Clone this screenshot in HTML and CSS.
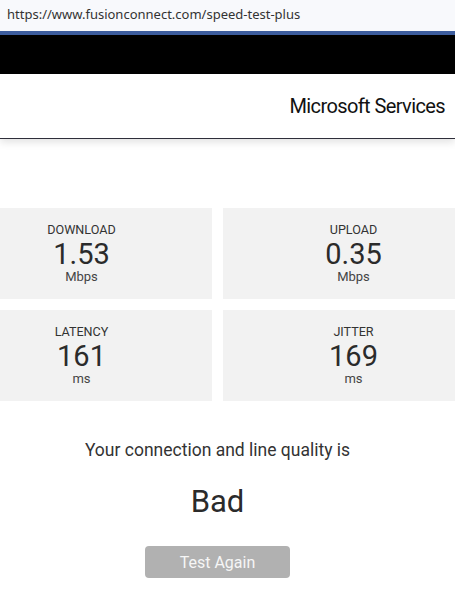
FILE: index.html
```html
<!DOCTYPE html>
<html lang="en">

<head>
  <meta charset="UTF-8">
  <title>Speed Test Plus</title>
  <link rel="stylesheet" href="styles.css">
</head>

<body>
  <div class="addressBar">https://www.fusionconnect.com/speed-test-plus</div>
  <div class="topBand"></div>
  <div class="header">
    <span class="brand">Microsoft Services</span>
  </div>

  <div class="main">
    <div class="results">
      <div class="card">
        <div class="label">DOWNLOAD</div>
        <div class="value">1.53</div>
        <div class="unit">Mbps</div>
      </div>
      <div class="card">
        <div class="label">UPLOAD</div>
        <div class="value">0.35</div>
        <div class="unit">Mbps</div>
      </div>
      <div class="card">
        <div class="label">LATENCY</div>
        <div class="value">161</div>
        <div class="unit">ms</div>
      </div>
      <div class="card">
        <div class="label">JITTER</div>
        <div class="value">169</div>
        <div class="unit">ms</div>
      </div>
    </div>

    <div class="summary">
      <p class="quality">Your connection and line quality is</p>
      <p class="verdict">Bad</p>
      <button class="again">Test Again</button>
    </div>
  </div>
</body>

</html>
```

FILE: styles.css
```css
* {
  margin: 0;
  padding: 0;
  box-sizing: border-box;
}

body {
  width: 455px;
  overflow: hidden;
  background-color: #fff;
  font-family: Roboto, "Liberation Sans", sans-serif;
  color: #2b2b2b;
}

/* browser address bar */
.addressBar {
  height: 31px;
  padding-left: 7px;
  line-height: 28px;
  background-color: #f8f9fc;
  font-family: "Noto Sans", "Open Sans", sans-serif;
  font-size: 13px;
  color: #333;
}

.topBand {
  height: 43px;
  border-top: 4px solid #3d5d9e;
  background-color: #000;
}

.header {
  display: flex;
  justify-content: flex-end;
  align-items: center;
  height: 65px;
  padding-right: 10px;
  border-bottom: 1px solid #2e2e3a;
  box-shadow: 0 3px 8px rgba(0, 0, 0, 0.12);
}

.header .brand {
  font-size: 20px;
  letter-spacing: -0.6px;
  color: #111;
}

.main {
  width: 435px;
  padding-top: 69px;
}

.results {
  display: grid;
  grid-template-columns: 261px 261px;
  justify-content: center;
  gap: 11px;
}

.card {
  height: 91px;
  padding-top: 15px;
  background-color: #f2f2f2;
  text-align: center;
}

.card .label {
  font-size: 12.6px;
  line-height: 14px;
  color: #333;
}

.card .value {
  margin-top: 1px;
  font-size: 29px;
  line-height: 33px;
  color: #2b2b2b;
}

.card .unit {
  font-size: 13px;
  line-height: 12px;
  color: #444;
}

.summary {
  padding-top: 38px;
  text-align: center;
}

.summary .quality {
  font-size: 17.5px;
  line-height: 22px;
  color: #333;
}

.summary .verdict {
  margin-top: 22px;
  font-size: 31px;
  line-height: 38px;
  color: #2b2b2b;
}

.summary .again {
  width: 145px;
  height: 32px;
  margin-top: 25px;
  border: none;
  border-radius: 4px;
  background-color: #b1b1b1;
  font-family: Roboto, "Liberation Sans", sans-serif;
  font-size: 16px;
  color: #f6f6f6;
}
```
